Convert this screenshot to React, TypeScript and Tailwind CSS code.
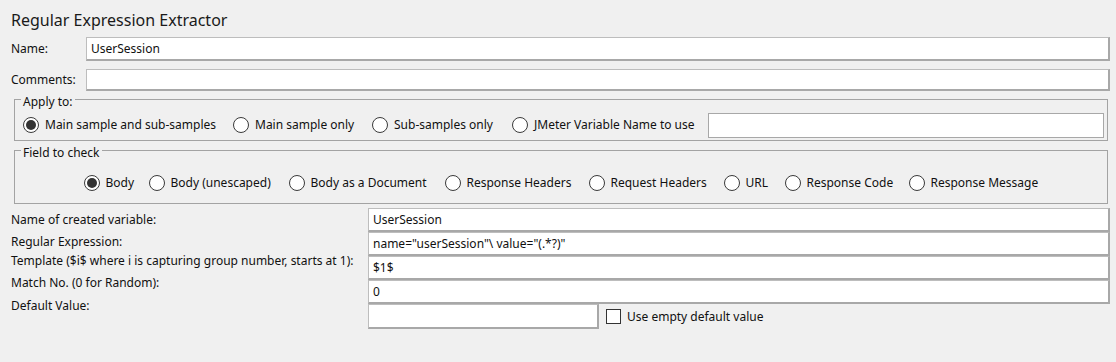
import React from "react";

function Radio({ checked, label, className }: { checked?: boolean; label: string; className?: string }) {
  return (
    <div className={"flex items-center gap-[6px] shrink-0 " + (className ?? "")}>
      <span className="w-[16px] h-[16px] shrink-0 rounded-full border border-[#3a3a3a] bg-white flex items-center justify-center">
        {checked && <span className="w-[10px] h-[10px] rounded-full bg-[#333333]" />}
      </span>
      <span className="whitespace-nowrap">{label}</span>
    </div>
  );
}

function Field({ value, className }: { value?: string; className?: string }) {
  return (
    <div
      className={
        "bg-white border-t border-l border-t-[#bdbdbd] border-l-[#bdbdbd] border-r-2 border-b-2 border-r-[#a8a8a8] border-b-[#a8a8a8] flex items-center pl-[4px] whitespace-nowrap " +
        (className ?? "")
      }
    >
      {value}
    </div>
  );
}

export default function App() {
  return (
    <div className="w-[1116px] h-[362px] bg-[#f0f0f0] text-[12px] leading-[16px] text-[#111111] font-['Noto_Sans',sans-serif] overflow-hidden">
      <div className="pt-[10px] pl-[11px] text-[16px] leading-[20px] text-[#1a1a1a]">Regular Expression Extractor</div>

      <div className="mt-[7px] flex items-center pl-[11px] pr-[6px]">
        <div className="w-[75px]">Name:</div>
        <Field value="UserSession" className="flex-1 h-[24px]" />
      </div>

      <div className="mt-[8px] flex items-center pl-[11px] pr-[6px]">
        <div className="w-[75px]">Comments:</div>
        <Field className="flex-1 h-[22px]" />
      </div>

      <fieldset className="-mt-[3px] ml-[14px] mr-[8px] border border-[#a3a3a3]">
        <legend className="ml-[6px] px-[2px] pt-[6px] leading-[16px]">Apply to:</legend>
        <div className="h-[30px] flex items-center pl-[8px] pr-[3px] gap-[16px]">
          <Radio checked label="Main sample and sub-samples" className="w-[194px]" />
          <Radio label="Main sample only" className="w-[123px]" />
          <Radio label="Sub-samples only" className="w-[124px]" />
          <Radio label="JMeter Variable Name to use" className="w-[180px]" />
          <div className="flex-1 h-[25px] bg-white border border-[#a8a8a8]" />
        </div>
      </fieldset>

      <fieldset className="-mt-[2px] ml-[14px] mr-[8px] border border-[#a3a3a3]">
        <legend className="ml-[6px] px-[2px] pt-[6px] leading-[16px]">Field to check</legend>
        <div className="h-[42px] pt-[2px] flex items-center justify-center gap-[16px]">
          <Radio checked label="Body" className="w-[49px]" />
          <Radio label="Body (unescaped)" className="w-[124px]" />
          <Radio label="Body as a Document" className="w-[140px]" />
          <Radio label="Response Headers" className="w-[128px]" />
          <Radio label="Request Headers" className="w-[119px]" />
          <Radio label="URL" className="w-[45px]" />
          <Radio label="Response Code" className="w-[108px]" />
          <Radio label="Response Message" className="w-[130px]" />
        </div>
      </fieldset>

      <div className="mt-[4px] flex pl-[11px] pr-[6px]">
        <div className="w-[357px] flex flex-col">
          <div className="h-[24px] flex items-center">Name of created variable:</div>
          <div className="h-[19px] flex items-center">Regular Expression:</div>
          <div className="h-[20px] flex items-center">Template ($i$ where i is capturing group number, starts at 1):</div>
          <div className="h-[23px] flex items-center">Match No. (0 for Random):</div>
          <div className="h-[24px] flex items-center">Default Value:</div>
        </div>
        <div className="flex-1 flex flex-col">
          <Field value="UserSession" className="h-[24px]" />
          <Field value={'name="userSession"\\ value="(.*?)"'} className="h-[24px]" />
          <Field value="$1$" className="h-[24px]" />
          <Field value="0" className="h-[24px]" />
          <div className="flex items-center">
            <Field className="w-[231px] h-[25px]" />
            <span className="ml-[7px] w-[15px] h-[15px] bg-white border border-[#333333]" />
            <span className="ml-[6px]">Use empty default value</span>
          </div>
        </div>
      </div>
    </div>
  );
}
